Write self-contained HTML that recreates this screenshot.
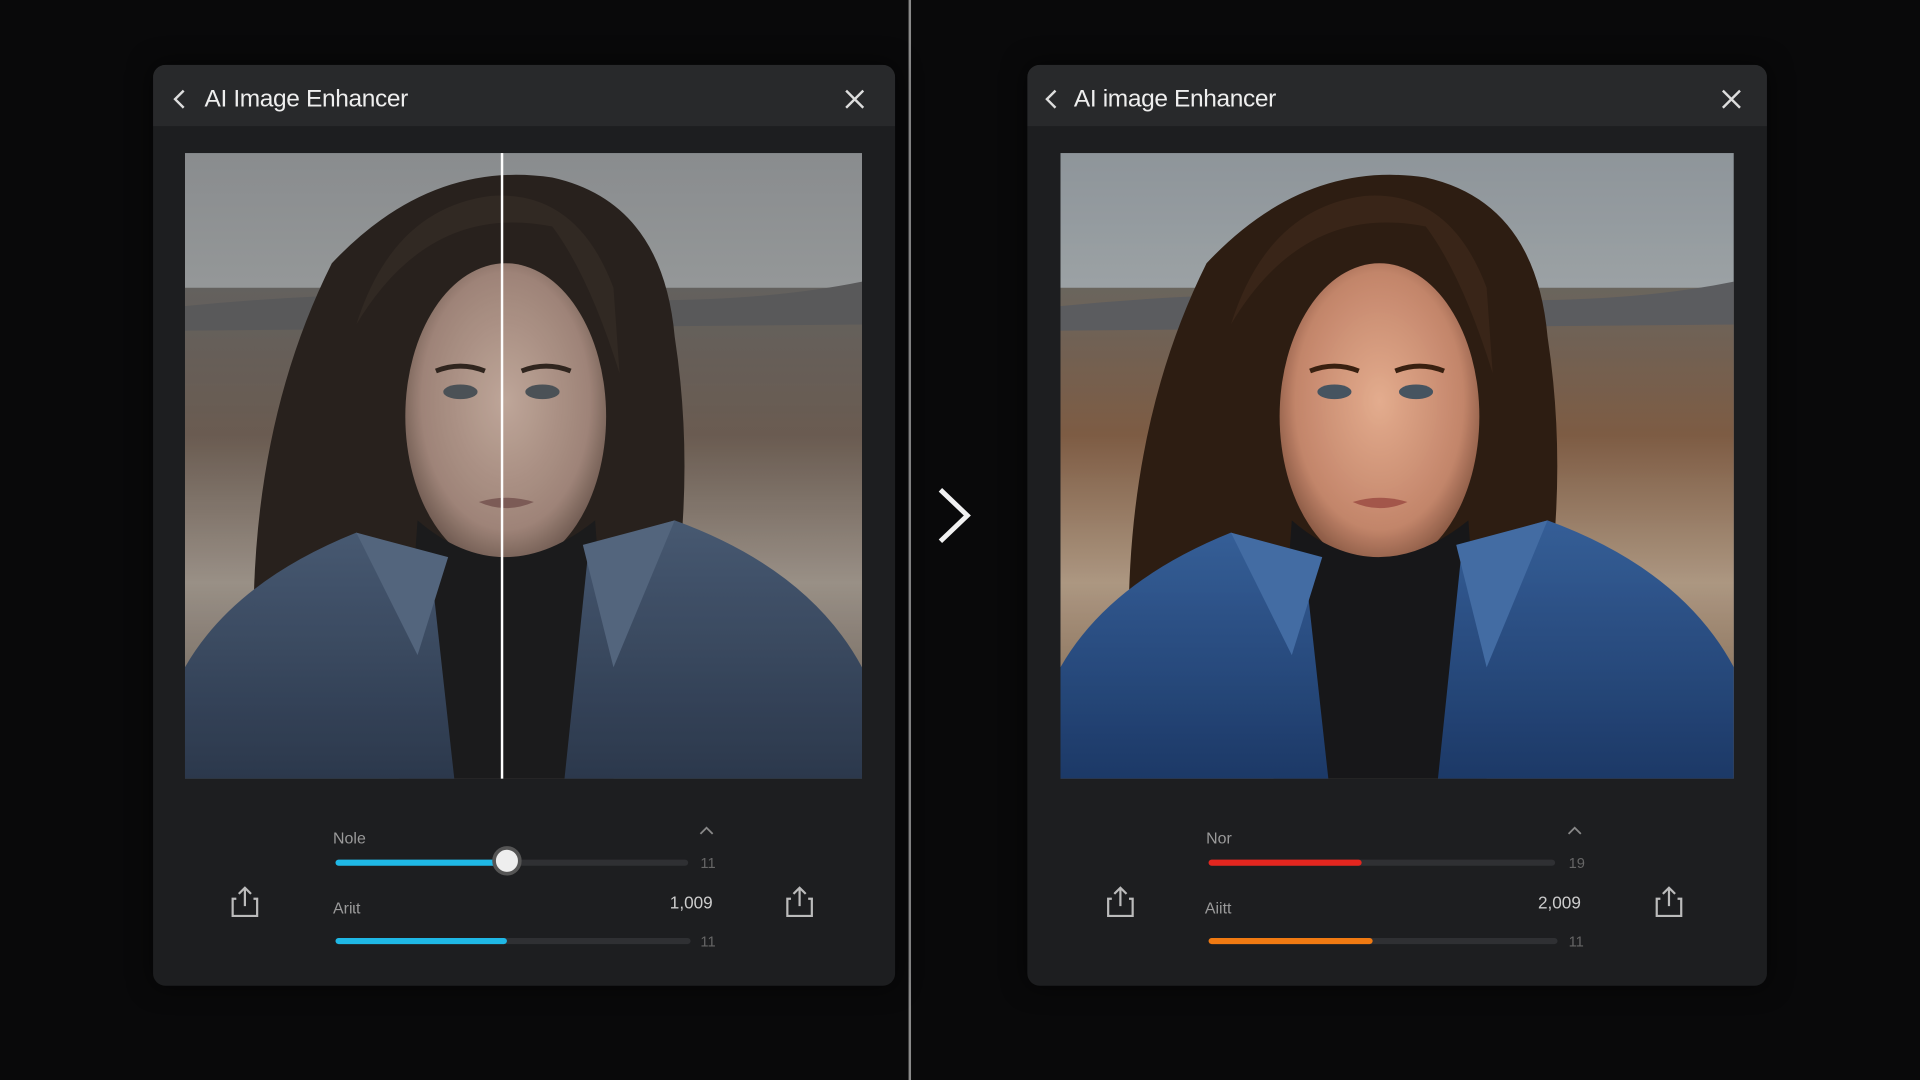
<!DOCTYPE html>
<html><head><meta charset="utf-8">
<style>
html,body{margin:0;padding:0;background:#09090a;width:1920px;height:1080px;overflow:hidden}
#w{position:absolute;left:0;top:0;width:1568px;height:882px;transform:scale(1.22449);transform-origin:0 0;font-family:"Liberation Sans",sans-serif}
.abs{position:absolute}
.panel{position:absolute;top:53px;width:606px;height:752px;background:#1d1e20;border-radius:10px;overflow:hidden;box-shadow:0 0 20px rgba(0,0,0,.6)}
.hdr{position:absolute;left:0;top:0;right:0;height:50px;background:#28292b}
.title{position:absolute;top:17px;font-size:20px;color:#eee;letter-spacing:-.3px}
.img{position:absolute;top:72px;height:511px;overflow:hidden}
.lbl{position:absolute;font-size:13px;color:#9a9a9a}
.num{position:absolute;font-size:12px;color:#666}
.track{position:absolute;height:5px;background:#2f3033;border-radius:3px}
.fill{position:absolute;left:0;top:0;height:5px;border-radius:3px}
</style></head><body>
<div id="w">
<svg width="0" height="0" style="position:absolute">
<defs>
<linearGradient id="sky" x1="0" y1="0" x2="0" y2="1"><stop offset="0" stop-color="#8e9498"/><stop offset="1" stop-color="#c8c9c8"/></linearGradient>
<linearGradient id="land" x1="0" y1="0" x2="0" y2="1"><stop offset="0" stop-color="#6a6660"/><stop offset=".3" stop-color="#7a5e4a"/><stop offset=".6" stop-color="#a89684"/><stop offset="1" stop-color="#6e5a48"/></linearGradient>
<radialGradient id="skin" cx=".5" cy=".45" r=".6"><stop offset="0" stop-color="#d9ab92"/><stop offset=".7" stop-color="#b98670"/><stop offset="1" stop-color="#6d4a3a"/></radialGradient>
<linearGradient id="jk" x1="0" y1="0" x2="0" y2="1"><stop offset="0" stop-color="#3d5f8e"/><stop offset="1" stop-color="#243c62"/></linearGradient>
<g id="photo">
<rect width="553" height="511" fill="url(#sky)"/>
<rect y="110" width="553" height="401" fill="url(#land)"/>
<path d="M0 125 Q150 110 300 118 T553 105 L553 140 L0 145Z" fill="#5d5e60"/>
<path d="M60 470 Q40 250 120 90 Q200 5 300 20 Q390 40 400 150 Q420 280 390 420 L300 450 L160 460Z" fill="#2f2219"/>
<ellipse cx="262" cy="215" rx="82" ry="125" fill="url(#skin)"/>
<path d="M140 140 Q200 40 300 60 Q330 100 355 180 L350 110 Q320 30 250 35 Q170 45 140 140Z" fill="#3a2a1f"/>
<ellipse cx="225" cy="195" rx="14" ry="6" fill="#4a5660"/><ellipse cx="292" cy="195" rx="14" ry="6" fill="#4a5660"/>
<path d="M205 178 Q225 170 245 178" stroke="#3a2518" stroke-width="4" fill="none"/><path d="M275 178 Q295 170 315 178" stroke="#3a2518" stroke-width="4" fill="none"/>
<path d="M240 285 Q262 278 285 285 Q262 295 240 285Z" fill="#9a5a50"/>
<path d="M190 300 Q260 360 335 300 L350 511 L175 511Z" fill="#1c1c1e"/>
<path d="M0 511 L0 420 Q40 350 140 310 L200 330 L220 511Z" fill="url(#jk)"/>
<path d="M553 511 L553 420 Q510 340 400 300 L330 320 L310 511Z" fill="url(#jk)"/>
<path d="M140 310 L190 410 L215 330Z" fill="#4a6c9a"/><path d="M400 300 L350 420 L325 320Z" fill="#4a6c9a"/>
</g>
</defs>
</svg>

<div class="abs" style="left:742px;top:0;width:1.5px;height:882px;background:#8a8a8a"></div>
<svg class="abs" style="left:762px;top:396px" width="34" height="50"><path d="M6 4 L28 25 L6 46" stroke="#f2f2f2" stroke-width="4" fill="none"/></svg>

<!-- left panel -->
<div class="panel" style="left:125px">
 <div class="hdr">
  <svg class="abs" style="left:15px;top:19px" width="14" height="18"><path d="M10 2 L3 9 L10 16" stroke="#ddd" stroke-width="2" fill="none"/></svg>
  <div class="title" style="left:42px">AI Image Enhancer</div>
  <svg class="abs" style="left:564px;top:19px" width="18" height="18"><path d="M2 2L16 16M16 2L2 16" stroke="#ddd" stroke-width="2"/></svg>
 </div>
 <div class="img" style="left:26px;width:553px">
  <svg width="553" height="511" style="filter:saturate(.55) brightness(.95)"><use href="#photo"/></svg>
  <div class="abs" style="left:258px;top:0;width:2px;height:511px;background:#fff"></div>
 </div>
 <div class="lbl" style="left:147px;top:624px">Nole</div>
 <svg class="abs" style="left:446px;top:621px" width="12" height="8"><path d="M1 7L6 2L11 7" stroke="#888" stroke-width="1.5" fill="none"/></svg>
 <div class="num" style="left:447px;top:645px">11</div>
 <div class="track" style="left:149px;top:649px;width:288px"><div class="fill" style="width:140px;background:#1fb8e6"></div></div>
 <div class="abs" style="left:277px;top:638px;width:24px;height:24px;border-radius:50%;background:#eee;border:3px solid #555;box-sizing:border-box"></div>
 <div class="lbl" style="left:147px;top:681px">Ariɩt</div>
 <div class="abs" style="left:422px;top:676px;font-size:14px;color:#ccc">1,009</div>
 <div class="track" style="left:149px;top:713px;width:290px"><div class="fill" style="width:140px;background:#1fb8e6"></div></div>
 <div class="num" style="left:447px;top:709px">11</div>
 <svg class="abs" style="left:62px;top:670px" width="26" height="28"><path d="M13 2V17M8 7L13 2L18 7M6 11H3V25H23V11H20" stroke="#bbb" stroke-width="1.8" fill="none"/></svg>
 <svg class="abs" style="left:515px;top:670px" width="26" height="28"><path d="M13 2V17M8 7L13 2L18 7M6 11H3V25H23V11H20" stroke="#bbb" stroke-width="1.8" fill="none"/></svg>
</div>

<!-- right panel -->
<div class="panel" style="left:839px;width:604px">
 <div class="hdr">
  <svg class="abs" style="left:13px;top:19px" width="14" height="18"><path d="M10 2 L3 9 L10 16" stroke="#ddd" stroke-width="2" fill="none"/></svg>
  <div class="title" style="left:38px">AI image Enhancer</div>
  <svg class="abs" style="left:566px;top:19px" width="18" height="18"><path d="M2 2L16 16M16 2L2 16" stroke="#ddd" stroke-width="2"/></svg>
 </div>
 <div class="img" style="left:27px;width:550px">
  <svg width="550" height="511" viewBox="0 0 553 511" preserveAspectRatio="none" style="filter:saturate(1.15) contrast(1.05)"><use href="#photo"/></svg>
 </div>
 <div class="lbl" style="left:146px;top:624px">Nor</div>
 <svg class="abs" style="left:441px;top:621px" width="12" height="8"><path d="M1 7L6 2L11 7" stroke="#888" stroke-width="1.5" fill="none"/></svg>
 <div class="num" style="left:442px;top:645px">19</div>
 <div class="track" style="left:148px;top:649px;width:283px"><div class="fill" style="width:125px;background:#e3261f"></div></div>
 <div class="lbl" style="left:145px;top:681px">Aiitt</div>
 <div class="abs" style="left:417px;top:676px;font-size:14px;color:#ccc">2,009</div>
 <div class="track" style="left:148px;top:713px;width:285px"><div class="fill" style="width:134px;background:#f07a12"></div></div>
 <div class="num" style="left:442px;top:709px">11</div>
 <svg class="abs" style="left:63px;top:670px" width="26" height="28"><path d="M13 2V17M8 7L13 2L18 7M6 11H3V25H23V11H20" stroke="#bbb" stroke-width="1.8" fill="none"/></svg>
 <svg class="abs" style="left:511px;top:670px" width="26" height="28"><path d="M13 2V17M8 7L13 2L18 7M6 11H3V25H23V11H20" stroke="#bbb" stroke-width="1.8" fill="none"/></svg>
</div>
</div>
</body></html>
